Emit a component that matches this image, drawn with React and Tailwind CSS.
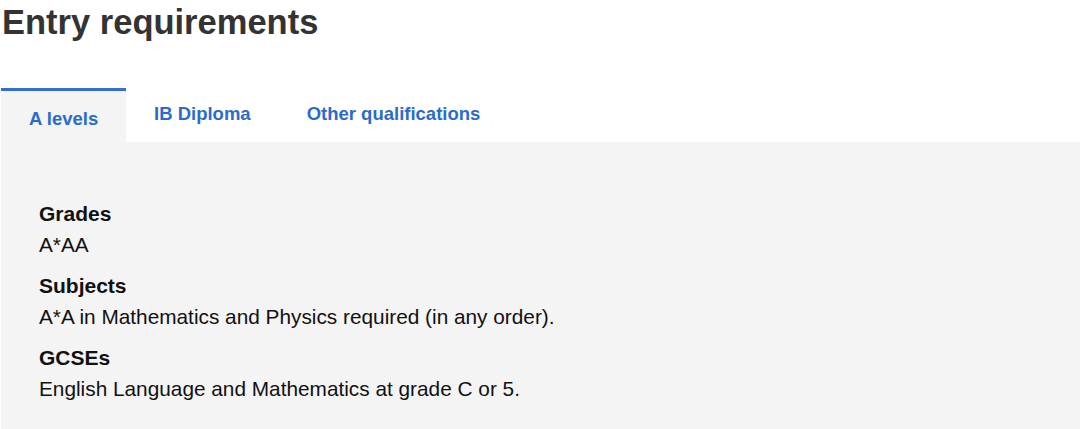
export default function App() {
  const items = [
    { label: "Grades", value: "A*AA" },
    { label: "Subjects", value: "A*A in Mathematics and Physics required (in any order)." },
    { label: "GCSEs", value: "English Language and Mathematics at grade C or 5." },
  ];

  return (
    <div className="w-[1080px] h-[429px] bg-white overflow-hidden font-['Liberation_Sans',Arial,sans-serif]">
      <h1 className="pl-[2px] pt-[3px] text-[34.5px] leading-[38px] font-bold text-[#333333]">
        Entry requirements
      </h1>

      <div className="mt-[47px] pl-[1px]">
        <div className="flex items-start">
          <button className="w-[125px] h-[54px] border-t-[3px] border-[#2f6fd6] bg-[#f4f4f4] pt-[5px] pl-[28px] text-left text-[18.5px] leading-6 font-bold text-[#2b6bcc]">
            A levels
          </button>
          <button className="px-[28px] pt-[14px] text-[18.5px] leading-6 font-bold text-[#2b6bcc]">
            IB Diploma
          </button>
          <button className="px-[28px] pt-[14px] text-[18.5px] leading-6 font-bold text-[#2b6bcc]">
            Other qualifications
          </button>
        </div>

        <div className="bg-[#f4f4f4] h-[287px] pl-[38px] pt-[60px] text-[#111111]">
          {items.map((item, index) => (
            <div key={index} className={index > 0 ? "mt-[17px]" : ""}>
              <h3 className="text-[21px] leading-6 font-bold">{item.label}</h3>
              <p className="mt-[7px] text-[20.8px] leading-6">{item.value}</p>
            </div>
          ))}
        </div>
      </div>
    </div>
  );
}
